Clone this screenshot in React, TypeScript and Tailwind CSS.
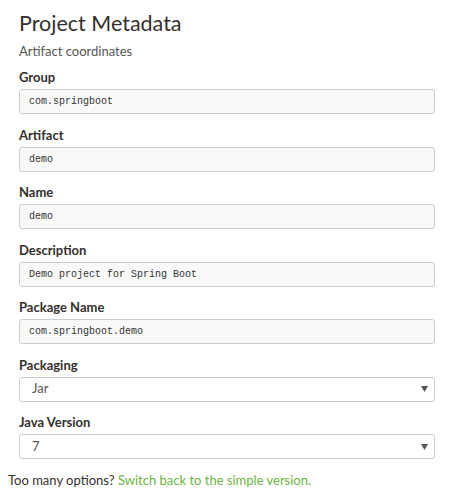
import React from "react";

const fields = [
  { label: "Group", value: "com.springboot" },
  { label: "Artifact", value: "demo" },
  { label: "Name", value: "demo" },
  { label: "Description", value: "Demo project for Spring Boot" },
  { label: "Package Name", value: "com.springboot.demo" },
];

const selects = [
  { label: "Packaging", value: "Jar" },
  { label: "Java Version", value: "7" },
];

function Arrow() {
  return (
    <svg width="7" height="6" viewBox="0 0 7 6" className="shrink-0">
      <path d="M0 0 H7 L3.5 6 Z" fill="#555" />
    </svg>
  );
}

export default function App() {
  return (
    <div
      className="w-[449px] h-[498px] bg-white text-[#34302d] overflow-hidden"
      style={{ fontFamily: 'Lato, "Open Sans", sans-serif' }}
    >
      <div className="pl-[19px] pr-[14px] pt-[8px]">
        <h1 className="text-[21.5px] leading-[30px] font-normal text-[#34302d]">
          Project Metadata
        </h1>
        <div className="mt-[4px] text-[13px] leading-[18px] text-[#555]">Artifact coordinates</div>
        <div className="mt-[8px] flex flex-col">
          {fields.map((f) => (
            <div key={f.label} className="mb-[11.5px]">
              <div className="text-[13px] leading-[18px] font-bold text-[#34302d]">{f.label}</div>
              <div className="mt-[3px] h-[25px] rounded-[3px] border border-[#ccc] bg-[#f9f9f9] pl-[9px] flex items-center">
                <span
                  className="text-[10px] text-[#333]"
                  style={{ fontFamily: '"Liberation Mono", "DejaVu Sans Mono", monospace' }}
                >
                  {f.value}
                </span>
              </div>
            </div>
          ))}
          {selects.map((s) => (
            <div key={s.label} className="mb-[11.5px]">
              <div className="text-[13px] leading-[18px] font-bold text-[#34302d]">{s.label}</div>
              <div className="mt-[3px] h-[25px] rounded-[3px] border border-[#ccc] bg-white pl-[12px] pr-[6px] flex items-center justify-between">
                <span className="text-[13px] text-[#555]">{s.value}</span>
                <Arrow />
              </div>
            </div>
          ))}
        </div>
      </div>
      <div className="pl-[8px] mt-[0px] text-[13px] leading-[18px] text-[#34302d]">
        Too many options? <span className="text-[#6db33f]">Switch back to the simple version.</span>
      </div>
    </div>
  );
}
